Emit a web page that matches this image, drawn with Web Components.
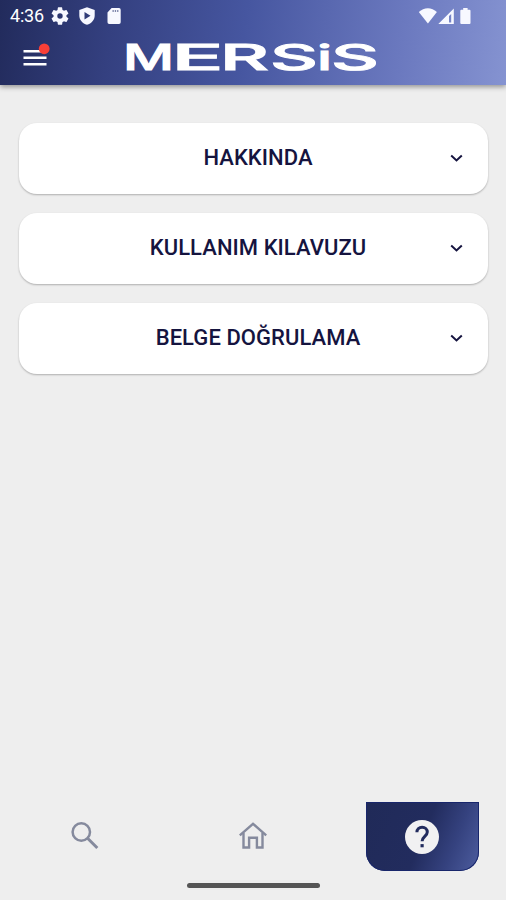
<!DOCTYPE html>
<html lang="tr">
<head>
<meta charset="utf-8">
<title>MERSiS</title>
<style>
html,body{margin:0;height:100%;overflow:hidden;background:#eee}
body{font-family:Roboto,"Noto Sans",sans-serif;color:#15143f}
</style>
</head>
<body>
<mersis-app></mersis-app>
<script>
const define = (name, html) => customElements.define(name, class extends HTMLElement {
  constructor() {
    super();
    this.attachShadow({mode: 'open'}).innerHTML = html;
  }
});

define('status-bar', `
<style>
:host{display:flex;align-items:center;height:31px;padding:0 30px 0 10px;box-sizing:border-box;color:#fff}
time{font-size:18px;line-height:31px;width:41px;letter-spacing:-.2px}
.l{display:flex;align-items:center;gap:9px}
.r{display:flex;margin-left:auto;align-items:center}
svg{display:block;fill:#f7f8ff}
</style>
<time>4:36</time>
<div class="l">
<svg width="18" height="18" viewBox="2 2 20 20"><path d="M19.14 12.94c.04-.3.06-.61.06-.94s-.02-.64-.07-.94l2.03-1.58a.49.49 0 0 0 .12-.61l-1.92-3.32a.49.49 0 0 0-.59-.22l-2.39.96a7 7 0 0 0-1.62-.94l-.36-2.54a.48.48 0 0 0-.48-.41h-3.84a.47.47 0 0 0-.47.41l-.36 2.54a7.3 7.3 0 0 0-1.62.94l-2.39-.96a.48.48 0 0 0-.59.22L2.74 8.87a.47.47 0 0 0 .12.61l2.03 1.58a6 6 0 0 0-.02 1.88l-2.03 1.58a.49.49 0 0 0-.12.61l1.92 3.32c.12.22.37.29.59.22l2.39-.96c.5.38 1.03.7 1.62.94l.36 2.54c.05.24.24.41.48.41h3.84c.24 0 .44-.17.47-.41l.36-2.54a7 7 0 0 0 1.62-.94l2.39.96c.22.08.47 0 .59-.22l1.92-3.32a.47.47 0 0 0-.12-.61zM12 15a3 3 0 1 1 0-6 3 3 0 0 1 0 6z"/></svg>
<svg width="18" height="18" viewBox="0 0 18 18"><path fill-rule="evenodd" d="M9 .2 1.300 3v5.500c0 4.400 3.200 8 7.700 9.300 4.500-1.300 7.700-4.900 7.700-9.300V3zM6.500 5v7.400L12.500 8.700z"/></svg>
<svg width="18" height="18" viewBox="0 0 18 18"><path fill-rule="evenodd" d="M6.600 1H14a1.700 1.700 0 0 1 1.700 1.700v12.600A1.700 1.700 0 0 1 14 17H4.200a1.700 1.700 0 0 1-1.700-1.700V5.500z"/><path fill="#7e86ab" d="M7.500 3h1.300v2H7.500zM9.800 3h1.300v2H9.800zM12.100 3h1.300v2h-1.300z"/></svg>
</div>
<div class="r">
<svg width="58" height="18" viewBox="0 0 58 18"><path d="M.8 5C6-.1 13.700-.1 18.900 5L9.900 16.500z"/><path fill-rule="evenodd" d="M20.300 17 35.800 1.500V17zM31 9v6.500h2.200V7z"/><path d="M45.200 1h4.400v1.700h1.900a1 1 0 0 1 1 1V16a1 1 0 0 1-1 1h-8.200a1 1 0 0 1-1-1V3.700a1 1 0 0 1 1-1h1.900z"/></svg>
</div>`);

define('brand-mark', `
<style>
:host{display:block;width:270px;height:54px}
svg{display:block}
text{font:500 34.800px Inter,"Liberation Sans",sans-serif;fill:#fff;stroke:#fff;stroke-width:.9px}
</style>
<svg width="270" height="54" viewBox="120 31 270 54" role="img" aria-label="MERSiS"><text y="70"><tspan x="123" textLength="51" lengthAdjust="spacingAndGlyphs">M</tspan><tspan x="171.500" textLength="52" lengthAdjust="spacingAndGlyphs">E</tspan><tspan x="220" textLength="49" lengthAdjust="spacingAndGlyphs">R</tspan><tspan x="270" textLength="48" lengthAdjust="spacingAndGlyphs">S</tspan><tspan x="317" textLength="15" lengthAdjust="spacingAndGlyphs">i</tspan><tspan x="331" textLength="48" lengthAdjust="spacingAndGlyphs">S</tspan></text></svg>`);

define('app-header', `
<style>
:host{display:block;height:85px;background:linear-gradient(97deg,#222b5c 0%,#344080 22%,#4656a0 48%,#6b79bf 79%,#8593d1 100%);box-shadow:0 2px 5px rgba(0,0,0,.38);position:relative}
.bar{display:flex;align-items:center;height:54px}
.menu{display:block;margin-left:20px;margin-right:68px}
brand-mark{flex:none}
</style>
<status-bar></status-bar>
<div class="bar">
<svg class="menu" width="32" height="32" viewBox="0 0 32 32"><path d="M3.500 9.200h23M3.500 15.700h23M3.500 22.200h23" stroke="#fff" stroke-width="2.600"/><circle cx="24.200" cy="6.800" r="5.400" fill="#f83f37"/></svg>
<brand-mark></brand-mark>
</div>`);

define('accordion-item', `
<style>
:host{display:grid;grid-template-columns:52px 1fr 44px;align-items:center;height:71px;border-radius:18px;background:#fff;padding:0 9px 0 10px;box-shadow:0 1px 2px rgba(0,0,0,.27)}
.t{grid-column:2;text-align:center;font-size:22px;font-weight:500;line-height:26px;letter-spacing:.05px;white-space:nowrap}
svg{display:block;justify-self:center;margin-bottom:1px}
</style>
<span class="t"><slot></slot></span>
<svg width="16" height="16" viewBox="0 0 16 16"><path d="M2.200 5.500 7.500 10.500l5.300-5" fill="none" stroke="#15143f" stroke-width="2"/></svg>`);

define('bottom-nav', `
<style>
:host{display:grid;grid-template-columns:repeat(3,1fr);height:69px;align-items:center}
svg{display:block;justify-self:center;margin-left:1px;margin-bottom:1px}
.active{justify-self:center;margin-left:1px;width:113px;height:69px;border-radius:0 0 19px 19px;background:linear-gradient(112deg,#202a58 0%,#222c5e 50%,#35427f 75%,#4d5d9f 100%);box-shadow:inset 0 0 0 1px #18266b;display:flex;align-items:center;justify-content:center}
.active svg{margin:0}
</style>
<svg width="28" height="28" viewBox="0 0 28 28" fill="none" stroke="#858a9d"><circle cx="10.300" cy="10" r="8.700" stroke-width="2.500"/><path d="m16.800 16.500 9.500 9.500" stroke-width="3"/></svg>
<svg width="30" height="28" viewBox="0 0 30 28" fill="none" stroke="#858a9d" stroke-width="2.400"><path d="M1.800 13.300 15 1.800l13.200 11.500"/><path d="M5.500 11v14.500h5.600v-9.700h7.800v9.700h5.600V11"/></svg>
<div class="active"><svg width="36" height="36" viewBox="0 0 36 36"><circle cx="18" cy="18" r="17" fill="#f1f1f2"/><path d="M12.900 13.300c0-3 2.300-5.100 5.200-5.100s5.200 2 5.200 4.900c0 4.100-5.200 4.600-5.200 9.100" fill="none" stroke="#222c5e" stroke-width="3"/><path d="M16.500 25.100h3.200v3.200h-3.200z" fill="#222c5e"/></svg></div>`);

define('mersis-app', `
<style>
:host{display:flex;flex-direction:column;width:506px;height:900px;background:#eee}
main{flex:1;display:flex;flex-direction:column;gap:19px;padding:37.500px 18px 0 19px}
.home{width:133px;height:5px;border-radius:3px;background:#555;margin:12px auto 12px 187px}
</style>
<app-header></app-header>
<main>
<accordion-item>HAKKINDA</accordion-item>
<accordion-item>KULLANIM KILAVUZU</accordion-item>
<accordion-item>BELGE DOĞRULAMA</accordion-item>
</main>
<bottom-nav></bottom-nav>
<div class="home"></div>`);
</script>
</body>
</html>
